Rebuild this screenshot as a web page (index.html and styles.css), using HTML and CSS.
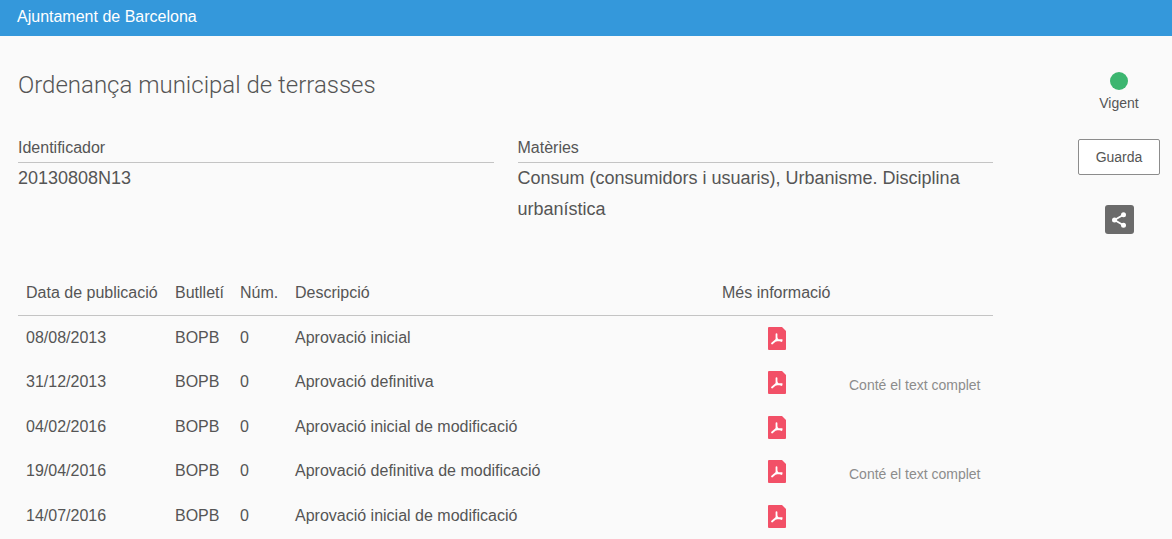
FILE: index.html
```html
<!DOCTYPE html>
<html lang="ca">
<head>
  <meta charset="UTF-8">
  <meta name="viewport" content="width=device-width, initial-scale=1">
  <title>Ordenança municipal de terrasses</title>
  <link rel="stylesheet" href="styles.css">
</head>
<body>

  <!-- shared icon shapes -->
  <svg class="sprite" aria-hidden="true">
    <symbol id="icon-pdf" viewBox="0 0 18 23">
      <path fill="#f25067" d="M1 0h13l4 4v18a1 1 0 0 1-1 1H1a1 1 0 0 1-1-1V1a1 1 0 0 1 1-1z"/>
      <path fill="none" stroke="#fff" stroke-width="1.8" stroke-linecap="round" stroke-linejoin="round" d="M8.500 7.200v4.500c0 .7-.4 1.300-1 1.800L4 16.500M8.500 10c0 1.500.6 2.300 1.500 3l3.500 1M7 14c2-.9 4.500-1.100 6.800-.8"/>
    </symbol>
  </svg>

  <header class="topbar">Ajuntament de Barcelona</header>

  <div class="page">
    <main class="content">
      <h1>Ordenança municipal de terrasses</h1>

      <dl class="meta">
        <div class="meta-item">
          <dt>Identificador</dt>
          <dd>20130808N13</dd>
        </div>
        <div class="meta-item">
          <dt>Matèries</dt>
          <dd>Consum (consumidors i usuaris), Urbanisme. Disciplina urbanística</dd>
        </div>
      </dl>

      <table class="versions">
        <thead>
          <tr>
            <th class="col-date">Data de publicació</th>
            <th class="col-bulletin">Butlletí</th>
            <th class="col-num">Núm.</th>
            <th>Descripció</th>
            <th class="col-info">Més informació</th>
            <th class="col-note"></th>
          </tr>
        </thead>
        <tbody>
          <tr>
            <td>08/08/2013</td>
            <td>BOPB</td>
            <td>0</td>
            <td>Aprovació inicial</td>
            <td class="info"><a href="#" aria-label="PDF"><svg class="pdf"><use href="#icon-pdf"/></svg></a></td>
            <td></td>
          </tr>
          <tr>
            <td>31/12/2013</td>
            <td>BOPB</td>
            <td>0</td>
            <td>Aprovació definitiva</td>
            <td class="info"><a href="#" aria-label="PDF"><svg class="pdf"><use href="#icon-pdf"/></svg></a></td>
            <td class="note">Conté el text complet</td>
          </tr>
          <tr>
            <td>04/02/2016</td>
            <td>BOPB</td>
            <td>0</td>
            <td>Aprovació inicial de modificació</td>
            <td class="info"><a href="#" aria-label="PDF"><svg class="pdf"><use href="#icon-pdf"/></svg></a></td>
            <td></td>
          </tr>
          <tr>
            <td>19/04/2016</td>
            <td>BOPB</td>
            <td>0</td>
            <td>Aprovació definitiva de modificació</td>
            <td class="info"><a href="#" aria-label="PDF"><svg class="pdf"><use href="#icon-pdf"/></svg></a></td>
            <td class="note">Conté el text complet</td>
          </tr>
          <tr>
            <td>14/07/2016</td>
            <td>BOPB</td>
            <td>0</td>
            <td>Aprovació inicial de modificació</td>
            <td class="info"><a href="#" aria-label="PDF"><svg class="pdf"><use href="#icon-pdf"/></svg></a></td>
            <td></td>
          </tr>
        </tbody>
      </table>
    </main>

    <aside class="sidebar">
      <span class="dot"></span>
      <span class="status">Vigent</span>
      <button type="button" class="save">Guarda</button>
      <button type="button" class="share" aria-label="Comparteix">
        <svg width="29" height="29" viewBox="0 0 29 29">
          <path d="M18.500 9.700L9.500 15l9 5.300" fill="none" stroke="#fff" stroke-width="1.800"/>
          <circle cx="18.500" cy="9.700" r="2.500" fill="#fff"/>
          <circle cx="9.500" cy="15" r="2.500" fill="#fff"/>
          <circle cx="18.500" cy="20.300" r="2.500" fill="#fff"/>
        </svg>
      </button>
    </aside>
  </div>

</body>
</html>
```

FILE: styles.css
```css
* {
  box-sizing: border-box;
}

body {
  margin: 0;
  background: #fafafa;
  color: #555;
  font-family: "Liberation Sans", Arial, sans-serif;
  font-size: 16px;
}

.sprite {
  display: none;
}

.topbar {
  background: #3498db;
  color: #fff;
  padding: 7px 17px 9px;
  line-height: 20px;
}

.page {
  display: flex;
  gap: 85px;
  padding: 32px 12px 0 18px;
}

.content {
  flex: 1;
}

h1 {
  margin: 0 0 34px;
  font-family: Roboto, sans-serif;
  font-size: 24px;
  font-weight: 300;
  line-height: 34px;
}

.meta {
  display: grid;
  grid-template-columns: 1fr 1fr;
  gap: 24px;
  margin: 0 0 45px;
}

.meta dt {
  padding-bottom: 2px;
  border-bottom: 1px solid #c4c4c4;
  line-height: 24px;
}

.meta dd {
  margin: 0;
  font-size: 18px;
  line-height: 31px;
}

.versions {
  width: 100%;
  table-layout: fixed;
  border-collapse: collapse;
}

.versions th {
  padding: 12px 8px;
  border-bottom: 1px solid #c4c4c4;
  font-weight: normal;
  line-height: 21px;
  text-align: left;
}

.versions td {
  padding: 12px 8px;
  line-height: 20px;
  vertical-align: top;
}

.col-date {
  width: 149px;
}

.col-bulletin {
  width: 65px;
}

.col-num {
  width: 55px;
}

.col-info {
  width: 127px;
}

.col-note {
  width: 152px;
}

.versions .info {
  padding: 11px 10px 0 8px;
}

.pdf {
  display: block;
  width: 18px;
  height: 23px;
  margin: 0 auto;
}

.versions .note {
  padding: 15px 8px 10px;
  color: #8c8c8c;
  font-size: 14px;
}

.sidebar {
  display: flex;
  flex-direction: column;
  align-items: center;
  width: 82px;
  padding-top: 4px;
  font-size: 14px;
}

.dot {
  width: 18px;
  height: 18px;
  border-radius: 50%;
  background: #3cb670;
}

.status {
  margin: 3px 0 26px;
  line-height: 20px;
}

.save {
  width: 100%;
  height: 36px;
  border: 1px solid #8c8c8c;
  border-radius: 2px;
  background: #fff;
  color: inherit;
  font: inherit;
  cursor: pointer;
}

.share {
  margin-top: 30px;
  padding: 0;
  border: none;
  border-radius: 3px;
  background: #6b6b6b;
  cursor: pointer;
}

.share svg {
  display: block;
}
```
